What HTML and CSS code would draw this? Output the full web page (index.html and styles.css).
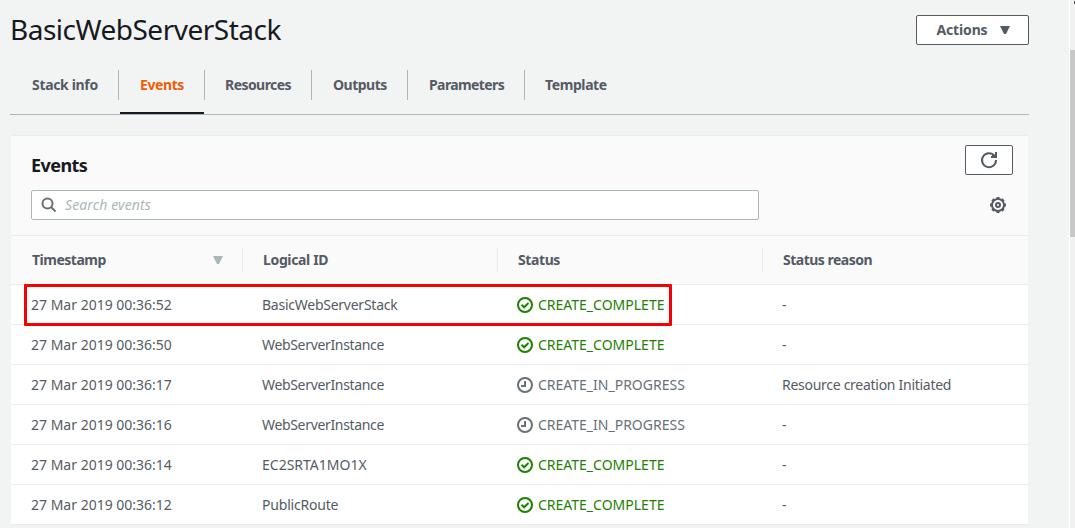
FILE: index.html
```html
<!DOCTYPE html>
<html lang="en">
<head>
<meta charset="utf-8">
<title>BasicWebServerStack</title>
<link rel="stylesheet" href="styles.css">
</head>
<body>
<svg class="sprite" width="0" height="0">
  <symbol id="ok" viewBox="0 0 16 16"><circle cx="8" cy="8" r="7"/><path d="M4.500 7.700l2.600 2.600L11.500 6"/></symbol>
  <symbol id="clock" viewBox="0 0 16 16"><circle cx="8" cy="8" r="7"/><path d="M8 4v5H4"/></symbol>
</svg>
<div class="app">
  <main class="content">
    <header class="page-header">
      <h1 class="title">BasicWebServerStack</h1>
      <button class="btn actions"><span class="actions-label">Actions</span><svg width="10" height="8" viewBox="0 0 10 8"><path d="M0 0h10L6 8H4z" fill="#545b64"/></svg></button>
    </header>
    <nav class="tabs">
      <a class="tab t-info"><span>Stack info</span></a>
      <a class="tab t-events active"><span>Events</span></a>
      <a class="tab t-resources"><span>Resources</span></a>
      <a class="tab t-outputs"><span>Outputs</span></a>
      <a class="tab t-params"><span>Parameters</span></a>
      <a class="tab t-template"><span>Template</span></a>
    </nav>
    <section class="panel">
      <div class="panel-head">
        <div class="panel-row">
          <h2 class="panel-title">Events</h2>
          <button class="btn refresh"><svg width="18" height="18" viewBox="0 0 18 18" fill="none" stroke="#545b64" stroke-width="2"><path d="M14.500 4.800A7 7 0 1 0 16 9M16 1v5h-5M12 5h3.500"/></svg></button>
        </div>
        <div class="panel-row">
          <div class="search"><svg width="16" height="16" viewBox="0 0 16 16" fill="none" stroke="#687078" stroke-width="2"><circle cx="6.500" cy="6.500" r="5"/><path d="M10 10l4.500 4.500"/></svg><span class="placeholder">Search events</span></div>
          <svg class="gear" width="16" height="16" viewBox="0 0 16 16" fill="none" stroke="#545b64"><circle cx="8" cy="8" r="6" stroke-width="2"/><g stroke-width="3"><path d="M8 0v2M8 14v2M0 8h2M14 8h2M2.400 2.400l1.400 1.400M12.200 12.200l1.400 1.400M2.400 13.600l1.400-1.400M12.200 3.800l1.400-1.400"/></g><circle cx="8" cy="8" r="2" stroke-width="2"/></svg>
        </div>
      </div>
      <div class="row head">
        <div class="cell"><span class="h-time">Timestamp</span><svg width="10" height="8" viewBox="0 0 10 8"><path d="M0 0h10L6 8H4z" fill="#aab7b8"/></svg></div>
        <div class="cell"><span class="h-id">Logical ID</span></div>
        <div class="cell"><span class="h-status">Status</span></div>
        <div class="cell"><span class="h-reason">Status reason</span></div>
      </div>
      <div class="row selected"><div class="cell time">27 Mar 2019 00:36:52</div><div class="cell n-stack">BasicWebServerStack</div><div class="cell ok"><svg class="icon"><use href="#ok"/></svg><span>CREATE_COMPLETE</span></div><div class="cell">-</div></div>
      <div class="row"><div class="cell time">27 Mar 2019 00:36:50</div><div class="cell n-inst">WebServerInstance</div><div class="cell ok"><svg class="icon"><use href="#ok"/></svg><span>CREATE_COMPLETE</span></div><div class="cell">-</div></div>
      <div class="row"><div class="cell time">27 Mar 2019 00:36:17</div><div class="cell n-inst">WebServerInstance</div><div class="cell wait"><svg class="icon"><use href="#clock"/></svg><span>CREATE_IN_PROGRESS</span></div><div class="cell reason">Resource creation Initiated</div></div>
      <div class="row"><div class="cell time">27 Mar 2019 00:36:16</div><div class="cell n-inst">WebServerInstance</div><div class="cell wait"><svg class="icon"><use href="#clock"/></svg><span>CREATE_IN_PROGRESS</span></div><div class="cell">-</div></div>
      <div class="row"><div class="cell time">27 Mar 2019 00:36:14</div><div class="cell n-rta">EC2SRTA1MO1X</div><div class="cell ok"><svg class="icon"><use href="#ok"/></svg><span>CREATE_COMPLETE</span></div><div class="cell">-</div></div>
      <div class="row"><div class="cell time">27 Mar 2019 00:36:12</div><div class="cell n-route">PublicRoute</div><div class="cell ok"><svg class="icon"><use href="#ok"/></svg><span>CREATE_COMPLETE</span></div><div class="cell">-</div></div>
    </section>
  </main>
  <div class="scrollbar"><div class="arrow"></div><div class="thumb"></div></div>
</div>
</body>
</html>
```
FILE: styles.css
```css
*, *::after { box-sizing: border-box; }
body { margin: 0; height: 528px; overflow: hidden; background: #f2f3f3; color: #545b64; font: 14px/20px "Noto Sans", sans-serif; }
.sprite { display: block; height: 0; }
.app { display: flex; height: 528px; justify-content: space-between; }
.content { width: 1019px; margin-left: 10px; }
.page-header { display: flex; justify-content: space-between; height: 70px; padding-top: 15px; }
.title { margin: -4px 0 0; font-size: 28px; line-height: 36px; font-weight: 400; letter-spacing: -0.5px; color: #16191f; white-space: nowrap; }
.btn { display: flex; align-items: center; justify-content: center; height: 30px; padding: 0; background: #fff; border: 1px solid #545b64; border-radius: 2px; font: 700 14px/20px "Noto Sans", sans-serif; color: #545b64; }
.actions { width: 113px; gap: 12px; padding-left: 1px; }
.actions-label { letter-spacing: -0.15px; }
.tabs { display: flex; height: 45px; border-bottom: 1px solid #aab7b8; font-weight: 700; white-space: nowrap; }
.tab { height: 30px; padding: 5px 0 0 21px; border-right: 1px solid #aab7b8; }
.t-info { width: 109px; padding-left: 22px; letter-spacing: -0.33px; }
.t-events { width: 86px; letter-spacing: -0.4px; }
.t-resources { width: 107px; padding-left: 20px; letter-spacing: -0.55px; }
.t-outputs { width: 96px; letter-spacing: -0.5px; }
.t-params { width: 117px; letter-spacing: -0.6px; }
.t-template { width: 104px; padding-left: 20px; border-right: 0; letter-spacing: -0.4px; }
.active { color: #eb5f07; }
.active::after { content: ""; display: block; width: 84px; height: 2px; margin: 17px 0 0 -20px; background: #16191f; }
.panel { margin: 20px 1px 0; background: #fff; }
.panel-head { height: 100px; border-top: 1px solid #eaeded; background: #fafafa; padding: 9px 15px 0 20px; }
.panel-row { display: flex; align-items: center; justify-content: space-between; height: 30px; margin-bottom: 15px; }
.panel-title { margin: 9px 0 0; font-size: 18px; line-height: 22px; letter-spacing: -0.55px; color: #16191f; }
.refresh { width: 48px; }
.search { display: flex; align-items: center; gap: 8px; width: 728px; height: 30px; padding-left: 9px; background: #fff; border: 1px solid #aab7b8; border-radius: 2px; }
.placeholder { color: #aab7b8; font-style: italic; letter-spacing: 0.12px; }
.gear { margin-right: 7px; }
.row { display: grid; grid-template-columns: 231px 255px 265px 266px; height: 40px; border-top: 1px solid #eaeded; white-space: nowrap; }
.row:last-child { height: 41px; border-bottom: 1px solid #eaeded; }
.cell { display: flex; align-items: center; padding-left: 20px; }
.head { grid-template-columns: 232px 255px 265px 265px; height: 49px; background: #fafafa; font-weight: 700; }
.head .cell { height: 24px; margin-top: 12px; padding: 0 19px 0 20px; justify-content: space-between; border-right: 1px solid #eaeded; }
.head .cell:first-child { padding-left: 21px; }
.head .cell:last-child { border-right: 0; }
.h-time { letter-spacing: -0.5px; }
.h-id { letter-spacing: -0.35px; }
.h-status { letter-spacing: -0.4px; }
.h-reason { letter-spacing: -0.5px; }
.n-stack { letter-spacing: -0.25px; }
.n-inst { letter-spacing: -0.33px; }
.n-route { letter-spacing: -0.2px; }
.reason { letter-spacing: -0.28px; }
.selected { position: relative; }
.selected::after { content: ""; position: absolute; left: 13px; top: -1px; width: 648px; height: 42px; border: 3px solid #f50005; border-radius: 1px; }
.icon { width: 16px; height: 16px; margin-right: 5px; fill: none; stroke: currentColor; stroke-width: 2; }
.ok { color: #1d8102; }
.wait { color: #687078; }
.scrollbar { width: 6px; border-left: 1px solid #fff; background: #f1f1f1; }
.arrow { width: 1px; height: 3px; margin: 1px 0 46px 4px; background: #505050; }
.thumb { height: 187px; background: #c8c8c8; }
```
